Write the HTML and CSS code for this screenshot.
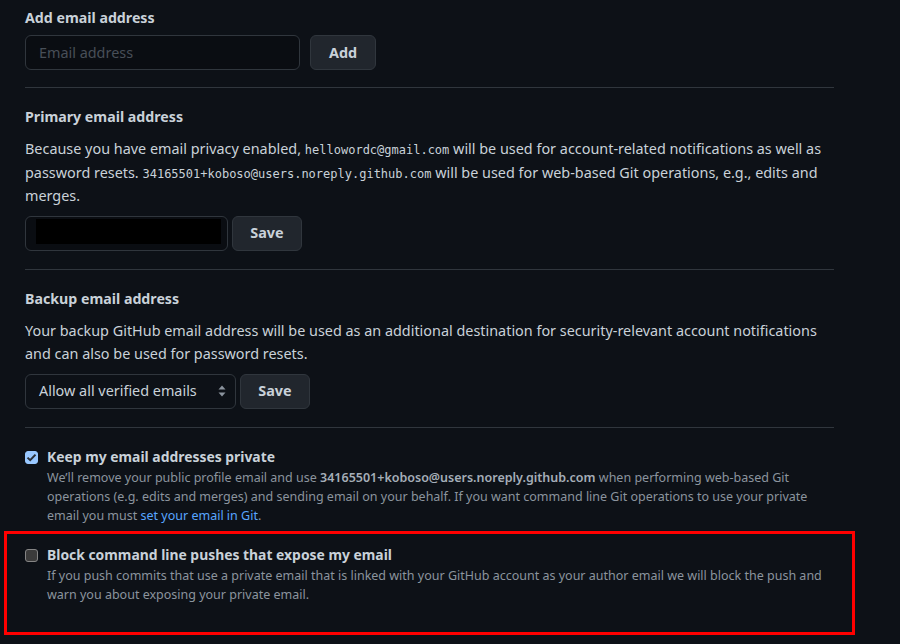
FILE: index.html
```html
<!DOCTYPE html>
<html>
<head>
<meta charset="utf-8">
<link rel="stylesheet" href="styles.css">
</head>
<body>
<div class="page">
  <section class="block block-first">
    <h2 class="heading">Add email address</h2>
    <div class="row">
      <input class="field field-add" type="text" placeholder="Email address">
      <button class="btn btn-add">Add</button>
    </div>
  </section>

  <section class="block">
    <h2 class="heading">Primary email address</h2>
    <p class="text">Because you have email privacy enabled, <code class="mono">hellowordc@gmail.com</code> will be used for account-related notifications as well as password resets. <code class="mono">34165501+koboso@users.noreply.github.com</code> will be used for web-based Git operations, e.g., edits and merges.</p>
    <div class="row">
      <div class="field field-primary"><span class="redacted"></span></div>
      <button class="btn btn-save">Save</button>
    </div>
  </section>

  <section class="block">
    <h2 class="heading">Backup email address</h2>
    <p class="text">Your backup GitHub email address will be used as an additional destination for security-relevant account notifications and can also be used for password resets.</p>
    <div class="row">
      <div class="field select">
        <span>Allow all verified emails</span>
        <svg class="select-arrows" width="8" height="14" viewBox="0 0 8 14"><path d="M4 1.5 L7.5 5.5 H0.5 Z" fill="#8b949e"/><path d="M4 12.5 L7.5 8.5 H0.5 Z" fill="#8b949e"/></svg>
      </div>
      <button class="btn btn-save2">Save</button>
    </div>
  </section>

  <section class="block block-last">
    <div class="check-item">
      <span class="box box-checked">
        <svg width="11" height="9" viewBox="0 0 11 9"><path d="M1.5 4.6 L4.2 7.2 L9.5 1.6" fill="none" stroke="#2b2f36" stroke-width="2"/></svg>
      </span>
      <div class="check-body">
        <div class="check-label">Keep my email addresses private</div>
        <p class="note">We’ll remove your public profile email and use <strong>34165501+koboso@users.noreply.github.com</strong> when performing web-based Git operations (e.g. edits and merges) and sending email on your behalf. If you want command line Git operations to use your private email you must <a class="link" href="#">set your email in Git</a>.</p>
      </div>
    </div>
  </section>

  <div class="highlight">
    <div class="check-item">
      <span class="box"></span>
      <div class="check-body">
        <div class="check-label">Block command line pushes that expose my email</div>
        <p class="note">If you push commits that use a private email that is linked with your GitHub account as your author email we will block the push and warn you about exposing your private email.</p>
      </div>
    </div>
  </div>
</div>
</body>
</html>
```

FILE: styles.css
```css
* { box-sizing: border-box; }
html, body {
  margin: 0;
  padding: 0;
  background: #0d1117;
}
body {
  font-family: "Noto Sans", "Open Sans", sans-serif;
  color: #c9d1d9;
  font-size: 14.4px;
  line-height: 23.5px;
  width: 900px;
  height: 644px;
  overflow: hidden;
}
.page {
  padding: 7px 0 0 0;
}
.block {
  margin: 0 66px 0 25px;
  border-bottom: 1px solid #30363d;
  padding-bottom: 18px;
  padding-top: 18px;
}
.block-first { padding-top: 0; padding-bottom: 17px; }
.block-last { border-bottom: none; padding-top: 18px; padding-bottom: 0; }
.heading {
  margin: 0 0 7px 0;
  font-size: 14.2px;
  font-weight: 700;
  line-height: 22px;
  color: #c9d1d9;
}
.block-first .heading { margin-bottom: 6px; }
.text {
  margin: 0 0 8px 0;
  padding-top: 2px;
}
.mono {
  font-family: "DejaVu Sans Mono", "Liberation Mono", monospace;
  font-size: 12px;
  line-height: 1;
  color: #c9d1d9;
}
.row {
  display: flex;
  gap: 10px;
  align-items: center;
}
.field {
  height: 35px;
  border: 1px solid #30363d;
  border-radius: 6px;
  background: #0a0d12;
  color: #c9d1d9;
  font: inherit;
}
.field-add {
  width: 275px;
  padding: 0 13px;
  outline: none;
}
.field-add::placeholder { color: #484f58; }
.field-primary {
  width: 203px;
  padding: 2px 6px 6px 10px;
  display: flex;
}
.redacted {
  display: block;
  width: 186px;
  height: 25px;
  background: #000;
}
.select {
  width: 211px;
  display: flex;
  align-items: center;
  justify-content: space-between;
  padding: 0 9px 0 13px;
  background: #0d1117;
}
.btn {
  height: 35px;
  border: 1px solid #30363d;
  border-radius: 6px;
  background: #21262d;
  color: #c9d1d9;
  font: inherit;
  font-weight: 700;
  padding: 0 16px;
  cursor: pointer;
}
.btn-add { width: 66px; }
.btn-save { width: 70px; margin-left: -6px; }
.btn-save2 { width: 70px; margin-left: -6px; }
.check-item {
  display: flex;
  align-items: flex-start;
  gap: 9px;
}
.box {
  flex: none;
  width: 13px;
  height: 13px;
  margin-top: 5px;
  border-radius: 3px;
  background: #3b3b3b;
  border: 1px solid #858585;
  display: flex;
  align-items: center;
  justify-content: center;
}
.box-checked {
  background: #99c8ff;
  border-color: #99c8ff;
}
.check-label {
  font-weight: 700;
  font-size: 13.9px;
  line-height: 22px;
  color: #c9d1d9;
}
.note {
  margin: 0;
  font-size: 12.5px;
  line-height: 19px;
  color: #8b949e;
}
.note strong { color: #a5aeb8; font-weight: 600; }
.link { color: #58a6ff; text-decoration: none; }
.highlight {
  margin: 6px 45px 0 4px;
  border: 3px solid #ff0000;
  height: 104px;
  padding: 10px 0 0 18px;
}
```
